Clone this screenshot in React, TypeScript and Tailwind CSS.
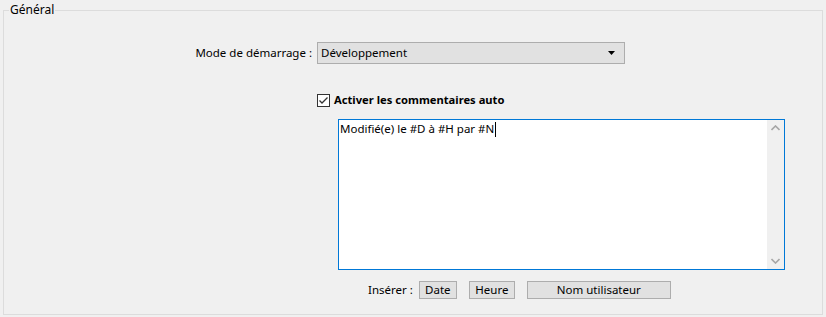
export default function App() {
	return (
		<div className="w-[826px] h-[317px] bg-[#f0f0f0] pt-[2px] px-[3px] text-[11.5px] text-black font-['Noto_Sans',sans-serif] leading-[16px] overflow-hidden">
			<fieldset className="border border-[#dcdcdc] h-[313px]">
				<legend className="ml-[5px] px-[1px] leading-[16px] text-[12px]">Général</legend>

				{/* Mode de démarrage */}
				<div className="flex items-center mt-[24px]">
					<div className="w-[308px] text-right">Mode de démarrage :</div>
					<div className="ml-[5px] w-[308px] h-[22px] border border-[#adadad] bg-[#e1e1e1] flex items-center justify-between pl-[3px] pr-[9px]">
						<span>Développement</span>
						<svg width="7" height="4" viewBox="0 0 7 4">
							<path d="M0 0 H7 L3.5 4 Z" fill="#000" />
						</svg>
					</div>
				</div>

				{/* Commentaires auto */}
				<div className="flex items-center ml-[313px] mt-[28px] h-[16px]">
					<div className="w-[13px] h-[13px] border border-[#333] bg-white flex items-center justify-center">
						<svg width="11" height="11" viewBox="0 0 11 11">
							<path d="M1.5 5.5 L4 8 L9.5 2.5" fill="none" stroke="#333" strokeWidth="1.3" />
						</svg>
					</div>
					<span className="ml-[4px] font-bold text-[11.2px]">Activer les commentaires auto</span>
				</div>

				<div className="ml-[334px] mt-[11px] w-[447px] h-[151px] border border-[#0078d7] bg-white flex">
					<div className="flex-1 pl-[1px] pt-[1px]">
						<span>Modifié(e) le #D à #H par #N</span>
						<span className="inline-block w-[1px] h-[15px] bg-black align-middle ml-[1px]" />
					</div>
					<div className="w-[17px] bg-[#f0f0f0] flex flex-col justify-between items-center py-[5px]">
						<svg width="9" height="6" viewBox="0 0 9 6">
							<path d="M0.5 5 L4.5 1 L8.5 5" fill="none" stroke="#a6a6a6" strokeWidth="1.6" />
						</svg>
						<svg width="9" height="6" viewBox="0 0 9 6">
							<path d="M0.5 1 L4.5 5 L8.5 1" fill="none" stroke="#a6a6a6" strokeWidth="1.6" />
						</svg>
					</div>
				</div>

				{/* Insérer */}
				<div className="flex items-center ml-[364px] mt-[11px] h-[18px]">
					<span className="mr-[6px]">Insérer :</span>
					<button className="w-[38px] h-[18px] border border-[#adadad] bg-[#e1e1e1] leading-[16px]">Date</button>
					<button className="ml-[12px] w-[46px] h-[18px] border border-[#adadad] bg-[#e1e1e1] leading-[16px]">Heure</button>
					<button className="ml-[12px] w-[144px] h-[18px] border border-[#adadad] bg-[#e1e1e1] leading-[16px]">Nom utilisateur</button>
				</div>
			</fieldset>
		</div>
	)
}
